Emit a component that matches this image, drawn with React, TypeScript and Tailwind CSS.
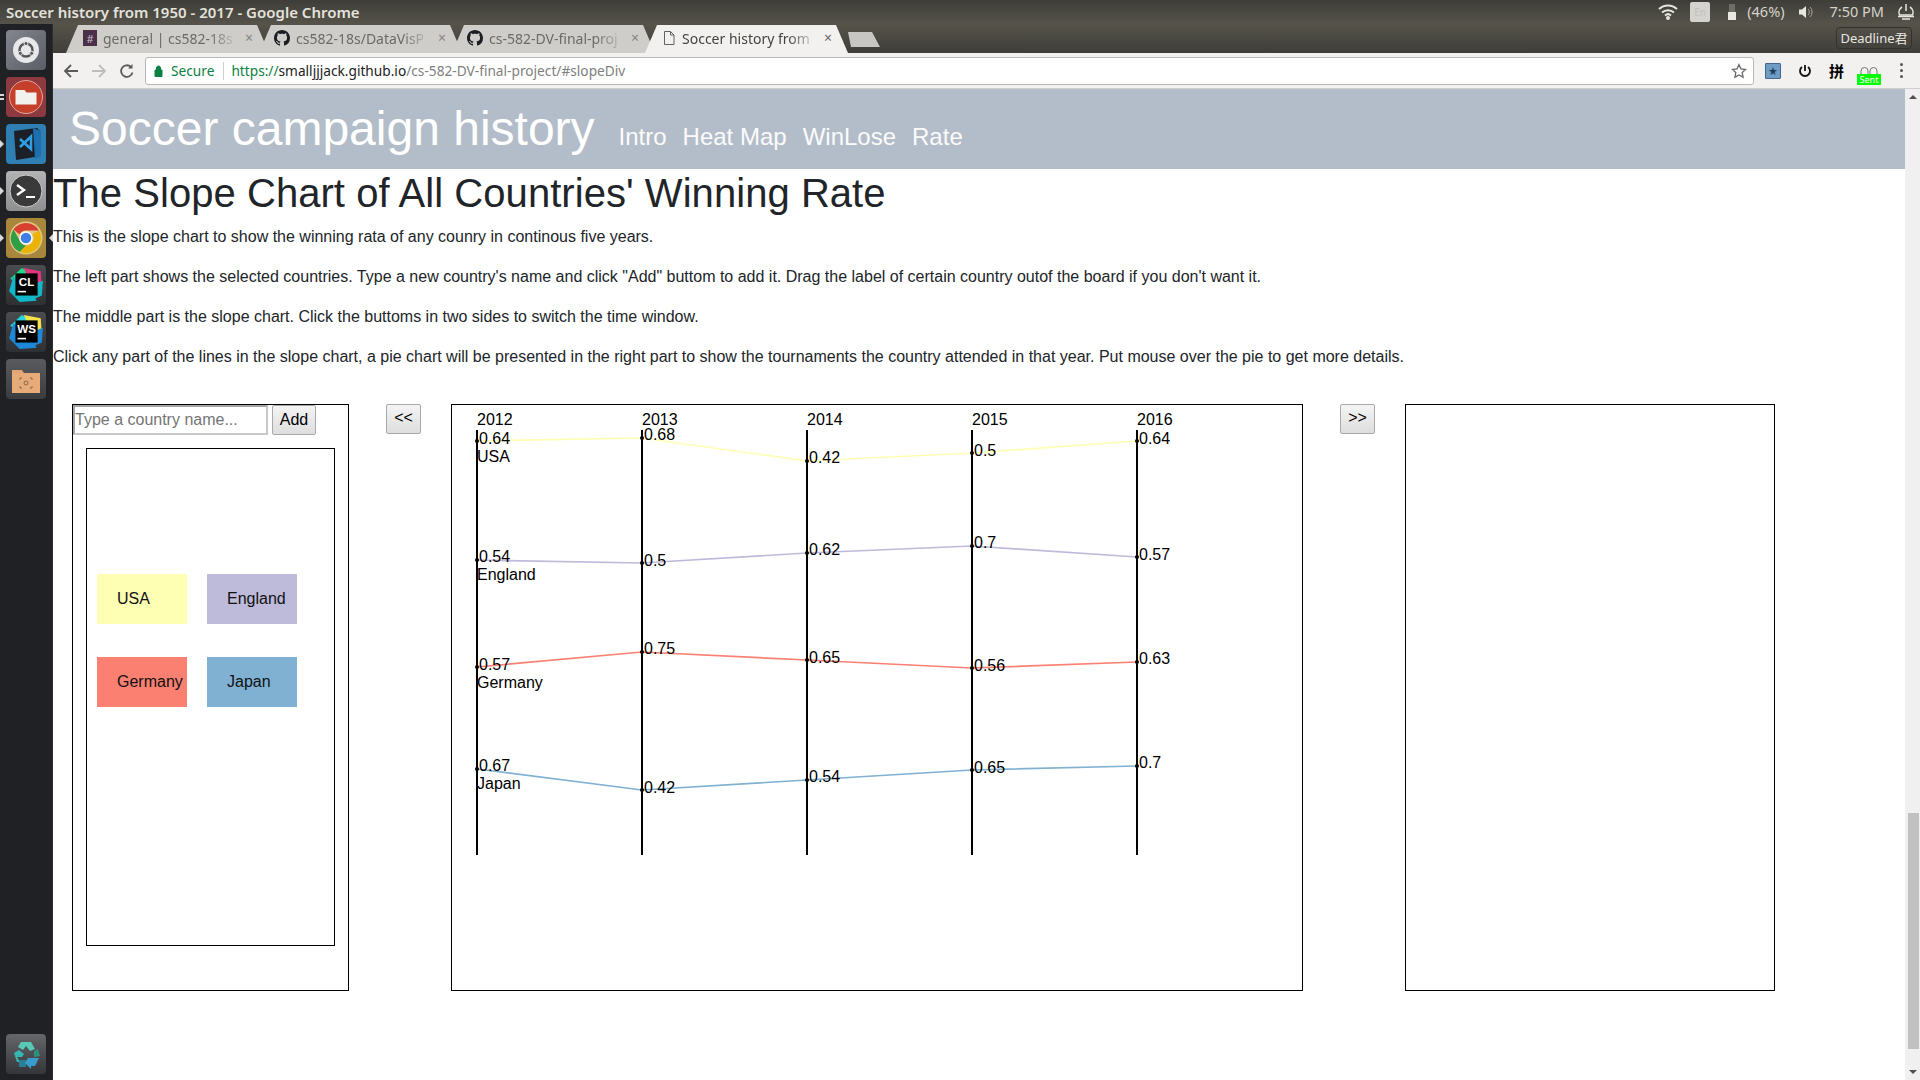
import React from "react";

const years = [2012, 2013, 2014, 2015, 2016];
const axisX = [477, 642, 807, 972, 1137];

const series = [
  { name: "USA", color: "#ffffb3", nameY: 462, ys: [441, 438, 461, 453, 441], labelYs: [444, 440, 463, 456, 444], values: ["0.64", "0.68", "0.42", "0.5", "0.64"] },
  { name: "England", color: "#bebada", nameY: 580, ys: [560, 563, 553, 546, 557], labelYs: [562, 566, 555, 548, 560], values: ["0.54", "0.5", "0.62", "0.7", "0.57"] },
  { name: "Germany", color: "#fb8072", nameY: 688, ys: [667, 652, 660, 668, 662], labelYs: [670, 654, 663, 671, 664], values: ["0.57", "0.75", "0.65", "0.56", "0.63"] },
  { name: "Japan", color: "#80b1d3", nameY: 789, ys: [769, 790, 780, 770, 766], labelYs: [771, 793, 782, 773, 768], values: ["0.67", "0.42", "0.54", "0.65", "0.7"] },
];

const tags = [
  { name: "USA", cls: "bg-[#ffffb3]" },
  { name: "England", cls: "bg-[#bebada]" },
  { name: "Germany", cls: "bg-[#fb8072]" },
  { name: "Japan", cls: "bg-[#80b1d3]" },
];

const paragraphs = [
  "This is the slope chart to show the winning rata of any counry in continous five years.",
  'The left part shows the selected countries. Type a new country\'s name and click "Add" buttom to add it. Drag the label of certain country outof the board if you don\'t want it.',
  "The middle part is the slope chart. Click the buttoms in two sides to switch the time window.",
  "Click any part of the lines in the slope chart, a pie chart will be presented in the right part to show the tournaments the country attended in that year. Put mouse over the pie to get more details.",
];

function GithubIcon() {
  return (
    <svg width="16" height="16" viewBox="0 0 16 16" fill="#1b1f23" className="shrink-0 -ml-[2px]">
      <path d="M8 0C3.58 0 0 3.58 0 8c0 3.54 2.29 6.53 5.47 7.59.4.07.55-.17.55-.38 0-.19-.01-.82-.01-1.49-2.01.37-2.53-.49-2.69-.94-.09-.23-.48-.94-.82-1.13-.28-.15-.68-.52-.01-.53.63-.01 1.08.58 1.23.82.72 1.21 1.87.87 2.33.66.07-.52.28-.87.51-1.07-1.78-.2-3.64-.89-3.64-3.95 0-.87.31-1.59.82-2.15-.08-.2-.36-1.02.08-2.12 0 0 .67-.21 2.2.82.64-.18 1.32-.27 2-.27s1.36.09 2 .27c1.53-1.04 2.2-.82 2.2-.82.44 1.1.16 1.92.08 2.12.51.56.82 1.27.82 2.15 0 3.07-1.87 3.75-3.65 3.95.29.25.54.73.54 1.48 0 1.07-.01 1.93-.01 2.2 0 .21.15.46.55.38A8.01 8.01 0 0 0 16 8c0-4.42-3.58-8-8-8z" />
    </svg>
  );
}

function SlackIcon() {
  return (
    <div className="w-[14px] h-[16px] shrink-0 bg-[#4a2f4b] flex items-center justify-center text-[11px] leading-none text-[#c9bcc9]">#</div>
  );
}

function PageIcon() {
  return (
    <svg width="14" height="16" viewBox="0 0 14 16" fill="none" stroke="#5f6368" className="shrink-0">
      <path d="M2.500 1.500h6l3.500 3.500v9.500h-9.500z M8.500 1.500v3.500h3.500" />
    </svg>
  );
}

function Tab({ icon, label, active }: { icon: React.ReactNode; label: string; active?: boolean }) {
  return (
    <div
      className={`relative w-[203px] h-[28px] -mr-[10px] flex items-center gap-[6px] pl-[17px] pr-[16px] pb-[2px] text-[14px] [clip-path:polygon(12px_0,calc(100%-12px)_0,100%_100%,0_100%)] ${
        active ? "z-10 bg-[#f2f1ef] text-[#45443f]" : "bg-[#cfcdca] text-[#6b6a66]"
      }`}
    >
      {icon}
      <span className="flex-1 overflow-hidden whitespace-nowrap [mask-image:linear-gradient(to_right,black_78%,transparent)]">{label}</span>
      <span className={`text-[14px] leading-none ${active ? "text-[#6b6a66]" : "text-[#85847f]"}`}>×</span>
    </div>
  );
}

function Tile({ className, pip, active, children }: { className: string; pip?: "one" | "two"; active?: boolean; children: React.ReactNode }) {
  return (
    <div className={`relative w-10 h-10 rounded-[4px] flex items-center justify-center ${className}`}>
      {children}
      {pip === "one" && (
        <div className="absolute -left-[6px] top-[16px] w-0 h-0 border-y-[4px] border-y-transparent border-l-[4px] border-l-[#d8d8d8]" />
      )}
      {pip === "two" && (
        <div className="absolute -left-[6px] top-[17px] flex flex-col gap-[2px]">
          <div className="w-[4px] h-[2px] bg-[#d8d8d8]" />
          <div className="w-[4px] h-[2px] bg-[#d8d8d8]" />
        </div>
      )}
      {active && (
        <div className="absolute -right-[7px] top-[16px] w-0 h-0 border-y-[4px] border-y-transparent border-r-[4px] border-r-[#d8d8d8]" />
      )}
    </div>
  );
}

function JetBrainsIcon({ label, a, b, c }: { label: string; a: string; b: string; c: string }) {
  return (
    <svg width="38" height="38" viewBox="0 0 36 36">
      <polygon points="3,12 14,2 24,6 18,20" fill={a} />
      <polygon points="16,2 32,5 33,22 22,16" fill={b} />
      <polygon points="2,24 6,10 24,24 28,33 12,34" fill={c} />
      <polygon points="23,18 34,14 33,28 26,31" fill={c} />
      <rect x="8" y="7" width="21" height="21" fill="#000" />
      <text x="18.500" y="19" textAnchor="middle" fontSize="11" fontWeight="700" fill="#fff" fontFamily="'Liberation Sans', sans-serif">{label}</text>
      <rect x="10" y="23.500" width="8" height="1.500" fill="#fff" />
    </svg>
  );
}

function Launcher() {
  return (
    <div className="w-[53px] shrink-0 bg-[#202124] border-r border-[#2c2d30] flex flex-col items-center pt-[6px] pb-[6px]">
      <div className="flex flex-col gap-[7px] -ml-[1px]">
        <Tile className="bg-gradient-to-br from-[#83868e] to-[#5b5d65]">
          <svg width="30" height="30" viewBox="0 0 30 30">
            <circle cx="15" cy="15" r="13" fill="#e8e8ea" />
            <circle cx="15" cy="15" r="6.500" fill="none" stroke="#555" strokeWidth="2.400" />
            <circle cx="15" cy="8.500" r="2" fill="#555" stroke="#e8e8ea" />
            <circle cx="9.300" cy="18.300" r="2" fill="#555" stroke="#e8e8ea" />
            <circle cx="20.700" cy="18.300" r="2" fill="#555" stroke="#e8e8ea" />
          </svg>
        </Tile>
        <Tile className="bg-[#8c3a40]" pip="two">
          <svg width="36" height="36" viewBox="0 0 36 36">
            <circle cx="18" cy="18" r="16.500" fill="#c63f2b" stroke="#e0a79d" strokeWidth="1" />
            <path d="M7.500 11h9l2 2.500h10v12h-21z" fill="#f3f1ee" />
          </svg>
        </Tile>
        <Tile className="bg-[#2f7fb2]" pip="one">
          <svg width="36" height="36" viewBox="0 0 36 36">
            <polygon points="6,5 29,2 32,5 33,30 8,34" fill="#1c1f26" />
            <polygon points="25,2 33,5 33,30 27,33" fill="#1e6fb0" />
            <path d="M12 13l11 10V10.500L12 21" fill="none" stroke="#2da0e8" strokeWidth="2.600" />
          </svg>
        </Tile>
        <Tile className="bg-gradient-to-b from-[#b3b3b3] to-[#8f8f8f]" pip="one">
          <svg width="34" height="34" viewBox="0 0 34 34">
            <circle cx="17" cy="17" r="16" fill="#3a3a3a" stroke="#d0d0d0" strokeWidth="1" />
            <path d="M8 11l7 5-7 5" fill="none" stroke="#fff" strokeWidth="2.400" />
            <path d="M17 23h9" stroke="#fff" strokeWidth="2" />
          </svg>
        </Tile>
        <Tile className="bg-[#a8873c]" pip="one" active>
          <svg width="34" height="34" viewBox="0 0 34 34">
            <circle cx="17" cy="17" r="16.500" fill="#e2c98a" />
            <path d="M17 2A15 15 0 0 1 30 9.500H17A7.500 7.500 0 0 0 10.500 13.200L4.500 8.500A15 15 0 0 1 17 2z" fill="#d93f31" />
            <path d="M4.500 8.500L11 20a7.500 7.500 0 0 0 6 4.500L11 31A15 15 0 0 1 4.500 8.500z" fill="#2f9e44" />
            <path d="M30 9.500A15 15 0 0 1 11 31L17 24.500A7.500 7.500 0 0 0 23.500 13z" fill="#eab308" />
            <circle cx="17" cy="17" r="6" fill="#3f7fe6" stroke="#fff" strokeWidth="1.400" />
          </svg>
        </Tile>
        <Tile className="bg-gradient-to-b from-[#4b4c50] to-[#2f3034]">
          <JetBrainsIcon label="CL" a="#21d789" b="#e0367c" c="#12b6c9" />
        </Tile>
        <Tile className="bg-gradient-to-b from-[#4b4c50] to-[#2f3034]">
          <JetBrainsIcon label="WS" a="#22d5e0" b="#f5e24a" c="#1e88d8" />
        </Tile>
        <Tile className="bg-gradient-to-b from-[#5a5b5f] to-[#3b3c40]">
          <svg width="36" height="34" viewBox="0 0 36 34">
            <path d="M4 8h10l2 3h16v20H4z" fill="#e2a571" />
            <rect x="4" y="11" width="28" height="20" fill="#e6ab78" />
            <path d="M14 16h-2v2M22 16h2v2M14 26h-2v-2M22 26h2v-2" fill="none" stroke="#8c6a4a" />
            <circle cx="18" cy="21" r="2" fill="none" stroke="#8c6a4a" />
          </svg>
        </Tile>
      </div>
      <div className="mt-auto -ml-[1px]">
        <Tile className="bg-gradient-to-b from-[#66676b] to-[#35363a]">
          <svg width="32" height="32" viewBox="0 0 32 32">
            <path d="M11 4h10l4 7-5 2-4-5-3 4-5-3z" fill="#57c9b5" />
            <path d="M4 15l5-3 5 4-2 3H7l3 5H7z" fill="#36b5b3" />
            <path d="M9 22h7v7H9z" fill="#2a7f96" />
            <path d="M18 20h11l-4 8h-4v3l-6-6z" fill="#3a9ccb" />
            <path d="M24 13l4-2 2 7-6 1z" fill="#2e8f7c" />
          </svg>
        </Tile>
      </div>
    </div>
  );
}

function TitleBar() {
  return (
    <div className="h-6 shrink-0 bg-gradient-to-b from-[#3e3d38] to-[#55534a] flex items-center justify-between pl-[6px] pr-[5px] text-[#e8e6e0] font-['Noto_Sans',sans-serif]">
      <span className="text-[15px] font-semibold whitespace-nowrap text-[#e4e2dc]">Soccer history from 1950 - 2017 - Google Chrome</span>
      <div className="flex items-center text-[#dfdbd2]">
        <svg width="20" height="16" viewBox="0 0 20 16" fill="none" stroke="#e8e6e0" strokeWidth="2">
          <path d="M1 5a13 13 0 0 1 18 0" />
          <path d="M4 8.500a9 9 0 0 1 12 0" />
          <path d="M7 11.500a4.500 4.500 0 0 1 6 0" />
          <circle cx="10" cy="14" r="1" fill="#e8e6e0" />
        </svg>
        <div className="ml-3 w-5 h-5 rounded-[2px] bg-[#d4d3d0] text-[10px] leading-5 text-center text-[#c2c1bd]">En</div>
        <div className="ml-[18px] w-2 h-4 flex flex-col">
          <div className="h-2 bg-[#6f6d66] mx-[1px]" />
          <div className="h-2 bg-[#e8e6e0]" />
        </div>
        <span className="ml-[11px] text-[14.500px] text-[#d5d3cc]">(46%)</span>
        <svg className="ml-[13px]" width="16" height="16" viewBox="0 0 16 16" fill="#e8e6e0">
          <path d="M1 5.500h3l4-3.500v12l-4-3.500H1z" />
          <path d="M10 5a4 4 0 0 1 0 6M12 3a7 7 0 0 1 0 10" fill="none" stroke="#a8a69f" />
        </svg>
        <span className="ml-4 text-[14.500px] text-[#d5d3cc] whitespace-nowrap">7:50 PM</span>
        <svg className="ml-[13px]" width="18" height="18" viewBox="0 0 18 18" fill="none" stroke="#e8e6e0" strokeWidth="1.500">
          <path d="M9 1v7" />
          <path d="M5 4a6.500 6.500 0 0 0-2.500 8h13A6.500 6.500 0 0 0 13 4" />
          <path d="M1 13.500h16M5 16h8" />
        </svg>
      </div>
    </div>
  );
}

function TabStrip() {
  return (
    <div className="h-[29px] shrink-0 bg-gradient-to-b from-[#55534a] to-[#3f3e39] flex items-end pl-[13px] pr-2 font-['Noto_Sans',sans-serif]">
      <Tab icon={<SlackIcon />} label="general | cs582-18s" />
      <Tab icon={<GithubIcon />} label="cs582-18s/DataVisP" />
      <Tab icon={<GithubIcon />} label="cs-582-DV-final-proj" />
      <Tab icon={<PageIcon />} label="Soccer history from" active />
      <div className="ml-[10px] mb-[6px] w-8 h-[15px] bg-[#c8c6c2] [clip-path:polygon(0_0,24px_0,100%_100%,3px_100%)]" />
      <div className="ml-auto mb-[4px] h-[22px] w-[76px] rounded-[4px] border border-[#33322e] text-[#e8e6e0] text-[13px] leading-5 text-center whitespace-nowrap font-['Noto_Sans','Noto_Sans_CJK_SC',sans-serif]">Deadline君</div>
    </div>
  );
}

function Toolbar() {
  return (
    <div className="h-9 shrink-0 bg-[#f2f1ef] border-b border-[#d0cfcc] flex items-center pl-[10px] font-['Noto_Sans',sans-serif]">
      <svg width="16" height="16" viewBox="0 0 16 16" fill="none" stroke="#5a5a5a" strokeWidth="1.800">
        <path d="M15 8H2M8 2L2 8l6 6" />
      </svg>
      <svg className="ml-[12px]" width="16" height="16" viewBox="0 0 16 16" fill="none" stroke="#bdbdbd" strokeWidth="1.800">
        <path d="M1 8h13M8 2l6 6-6 6" />
      </svg>
      <svg className="ml-[12px]" width="16" height="16" viewBox="0 0 16 16" fill="none" stroke="#5a5a5a" strokeWidth="1.800">
        <path d="M13.500 9.500A5.800 5.800 0 1 1 12 4" />
        <path d="M13.500 1v4.500H9" fill="#5a5a5a" stroke="none" />
      </svg>
      <div className="ml-[10px] w-[1609px] h-[28px] bg-white border border-[#b9b8b5] rounded-[3px] flex items-center pl-[8px] pr-[6px] text-[13.700px] whitespace-nowrap">
        <svg width="9" height="12" viewBox="0 0 9 12" fill="#0b8043">
          <path d="M1 5h7v6.500H1zM2.500 5V3a2 2 0 0 1 4 0v2" stroke="#0b8043" fill="#0b8043" />
        </svg>
        <span className="ml-[8px] pt-[1px] text-[#0b8043]">Secure</span>
        <div className="ml-[9px] w-px h-[18px] bg-[#cfcfcf]" />
        <span className="ml-[7px] pt-[1px] text-[#0b8043]">https://</span>
        <span className="pt-[1px] text-[#222]">smalljjjack.github.io</span>
        <span className="pt-[1px] text-[#808080]">/cs-582-DV-final-project/#slopeDiv</span>
        <svg className="ml-auto" width="16" height="16" viewBox="0 0 24 24" fill="none" stroke="#6b6b6b" strokeWidth="2">
          <path d="M12 2.500l3 6.300 6.800.9-5 4.700 1.300 6.800-6.100-3.300-6.100 3.300 1.300-6.800-5-4.700 6.800-.9z" />
        </svg>
      </div>
      <div className="ml-[11px] w-4 h-4 bg-[#6f9cc4] border border-[#44688a] rounded-[1px] flex items-center justify-center text-[11px] leading-none text-[#1f3f60]">★</div>
      <svg className="ml-[17px]" width="14" height="14" viewBox="0 0 14 14" fill="none" stroke="#111" strokeWidth="1.800">
        <path d="M7 1v6" />
        <path d="M4 3a5 5 0 1 0 6 0" />
      </svg>
      <span className="ml-[17px] w-[15px] text-[15px] leading-none font-bold text-black font-['Noto_Sans_CJK_SC',sans-serif]">拼</span>
      <div className="ml-[13px] mt-[10px] w-6 flex flex-col items-center">
        <svg width="18" height="7" viewBox="0 0 18 7" fill="none" stroke="#777">
          <path d="M1 7V4a3.500 3.500 0 0 1 7 0v3M10 7V4a3.500 3.500 0 0 1 7 0v3" />
        </svg>
        <div className="w-6 h-[11px] bg-[#00ff00] text-white text-[9px] leading-[11px] text-center">Sent</div>
      </div>
      <div className="ml-[19px] flex flex-col gap-[3px]">
        <div className="w-[3px] h-[3px] rounded-full bg-[#555]" />
        <div className="w-[3px] h-[3px] rounded-full bg-[#555]" />
        <div className="w-[3px] h-[3px] rounded-full bg-[#555]" />
      </div>
    </div>
  );
}

function SlopeChart() {
  return (
    <svg width="850" height="585" viewBox="452 405 850 585" fontSize="16" fontFamily="'Liberation Sans', sans-serif" fill="#000">
      {series.map((s) => (
        <polyline
          key={s.name}
          points={s.ys.map((y, i) => `${axisX[i]},${y}`).join(" ")}
          fill="none"
          stroke={s.color}
          strokeWidth="1.700"
        />
      ))}
      {axisX.map((x, i) => (
        <g key={x}>
          <line x1={x} y1="430" x2={x} y2="855" stroke="#000" strokeWidth="2" />
          <text x={x} y="425">{years[i]}</text>
        </g>
      ))}
      {series.map((s) => (
        <g key={s.name}>
          {s.ys.map((y, i) => (
            <g key={i}>
              <circle cx={axisX[i]} cy={y} r="2" fill="#000" />
              <text x={axisX[i] + 2} y={s.labelYs[i]}>{s.values[i]}</text>
            </g>
          ))}
          <text x="477" y={s.nameY}>{s.name}</text>
        </g>
      ))}
    </svg>
  );
}

function PageButton({ label }: { label: string }) {
  return (
    <button className="w-[35px] h-[30px] shrink-0 border border-[#a9a9a9] rounded-[2px] bg-gradient-to-b from-[#f4f4f4] to-[#dedede] text-[16px] leading-none pb-[2px] text-black">
      {label}
    </button>
  );
}

function Page() {
  return (
    <div className="flex-1 min-w-0 bg-white text-[#212529] font-['Liberation_Sans',sans-serif] text-base flex flex-col overflow-hidden">
      <div className="h-20 shrink-0 bg-[#b3bdc9] flex items-baseline pl-[16px] pt-[5px] text-white">
        <span className="text-[48px] leading-[70px] font-normal whitespace-nowrap">Soccer campaign history</span>
        <div className="ml-6 flex gap-4 text-[24px] text-[#fbfbfb] whitespace-nowrap">
          <span>Intro</span>
          <span>Heat Map</span>
          <span>WinLose</span>
          <span>Rate</span>
        </div>
      </div>
      <h1 className="text-[40px] leading-[48px] font-normal tracking-[0.05px] mb-2 whitespace-nowrap">The Slope Chart of All Countries' Winning Rate</h1>
      {paragraphs.map((p) => (
        <p key={p} className="leading-6 mb-4 whitespace-nowrap">{p}</p>
      ))}
      <div className="mt-[19px] pl-[19px] flex items-start text-black">
        <div className="w-[277px] h-[587px] shrink-0 border border-black">
          <div className="flex items-stretch">
            <input
              placeholder="Type a country name..."
              className="w-[195px] h-[30px] border-2 border-t-[#a5a5a5] border-l-[#a5a5a5] border-r-[#c8c8c8] border-b-[#c8c8c8] px-0 text-[16px] placeholder:text-[#757575] outline-none"
            />
            <button className="ml-1 w-11 h-[30px] border border-[#a9a9a9] rounded-[2px] bg-gradient-to-b from-[#f4f4f4] to-[#dedede] text-[16px]">Add</button>
          </div>
          <div className="ml-[13px] mt-[13px] w-[249px] h-[498px] border border-black pl-[10px] pt-[125px]">
            <div className="grid grid-cols-[90px_90px] gap-x-5 gap-y-[33px]">
              {tags.map((t) => (
                <div key={t.name} className={`h-[50px] pl-5 leading-[50px] text-[#111] whitespace-nowrap ${t.cls}`}>{t.name}</div>
              ))}
            </div>
          </div>
        </div>
        <div className="ml-[37px]"><PageButton label="<<" /></div>
        <div className="ml-[30px] w-[852px] h-[587px] shrink-0 border border-black">
          <SlopeChart />
        </div>
        <div className="ml-[37px]"><PageButton label=">>" /></div>
        <div className="ml-[30px] w-[370px] h-[587px] shrink-0 border border-black" />
      </div>
    </div>
  );
}

function Scrollbar() {
  return (
    <div className="w-[15px] shrink-0 bg-[#f0f0f0] flex flex-col items-center">
      <div className="mt-[6px] w-0 h-0 border-x-[4px] border-x-transparent border-b-[4px] border-b-[#505050]" />
      <div className="mt-[714px] ml-[1px] w-[11px] h-[236px] bg-[#c1c1c1]" />
      <div className="mt-auto mb-[6px] w-0 h-0 border-x-[4px] border-x-transparent border-t-[4px] border-t-[#505050]" />
    </div>
  );
}

export default function App() {
  return (
    <div className="w-[1920px] h-[1080px] flex flex-col overflow-hidden">
      <TitleBar />
      <div className="flex-1 min-h-0 flex">
        <Launcher />
        <div className="flex-1 min-w-0 flex flex-col">
          <TabStrip />
          <Toolbar />
          <div className="flex-1 min-h-0 flex">
            <Page />
            <Scrollbar />
          </div>
        </div>
      </div>
    </div>
  );
}
